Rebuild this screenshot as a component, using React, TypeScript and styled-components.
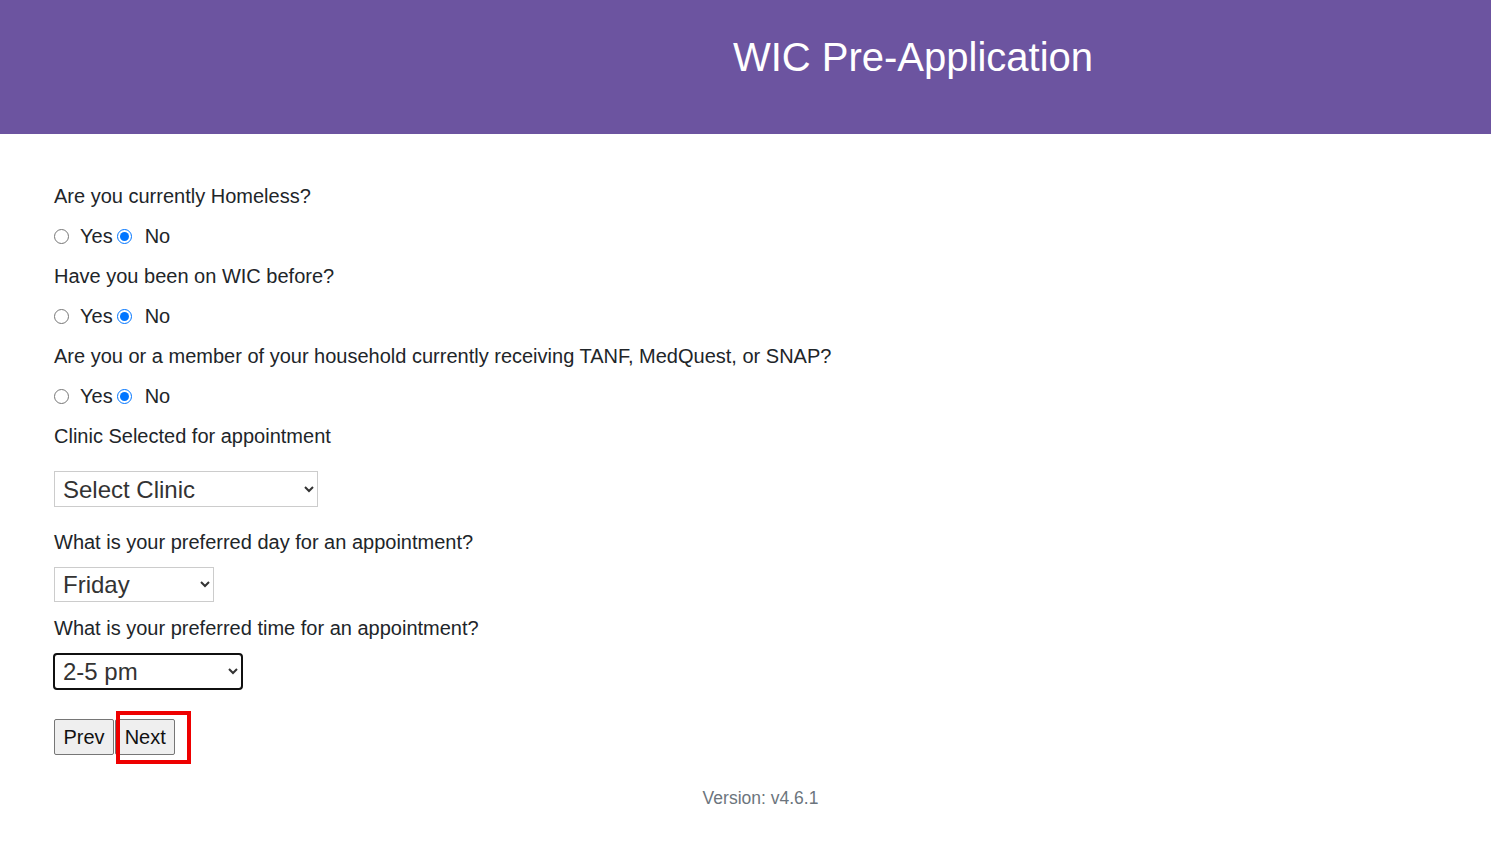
import React, { useState } from "react";
import styled, { createGlobalStyle } from "styled-components";

const GlobalStyle = createGlobalStyle`
  html, body {
    margin: 0;
    padding: 0;
    background: #ffffff;
  }
  body {
    font-family: "Liberation Sans", Arial, sans-serif;
    color: #212529;
  }
`;

type YesNo = "yes" | "no";

type Question = {
  id: string;
  text: string;
};

const questions: Question[] = [
  { id: "homeless", text: "Are you currently Homeless?" },
  { id: "wicBefore", text: "Have you been on WIC before?" },
  {
    id: "programs",
    text: "Are you or a member of your household currently receiving TANF, MedQuest, or SNAP?",
  },
];

export default function App() {
  const [answers, setAnswers] = useState<Record<string, YesNo>>({
    homeless: "no",
    wicBefore: "no",
    programs: "no",
  });
  const [clinic, setClinic] = useState("");
  const [day, setDay] = useState("Friday");
  const [time, setTime] = useState("2-5 pm");

  return (
    <>
      <GlobalStyle />
      <Header>
        <Title>WIC Pre-Application</Title>
      </Header>

      <Main>
        {questions.map((q) => (
          <React.Fragment key={q.id}>
            <Line>{q.text}</Line>
            <RadioRow>
              <Radio
                type="radio"
                name={q.id}
                checked={answers[q.id] === "yes"}
                onChange={() => setAnswers({ ...answers, [q.id]: "yes" })}
              />
              <RadioLabel>Yes</RadioLabel>
              <Radio
                type="radio"
                name={q.id}
                $spaced
                checked={answers[q.id] === "no"}
                onChange={() => setAnswers({ ...answers, [q.id]: "no" })}
              />
              <RadioLabel>No</RadioLabel>
            </RadioRow>
          </React.Fragment>
        ))}

        <Line>Clinic Selected for appointment</Line>
        <Select
          $width={264}
          $height={36}
          $gapTop={15}
          value={clinic}
          onChange={(e) => setClinic(e.target.value)}
        >
          <option value="">Select Clinic</option>
          <option value="honolulu">Honolulu</option>
          <option value="hilo">Hilo</option>
        </Select>

        <Line $gapTop={15}>What is your preferred day for an appointment?</Line>
        <Select
          $width={160}
          $height={35}
          $gapTop={5}
          value={day}
          onChange={(e) => setDay(e.target.value)}
        >
          <option>Monday</option>
          <option>Tuesday</option>
          <option>Wednesday</option>
          <option>Thursday</option>
          <option>Friday</option>
        </Select>

        <Line $gapTop={6}>What is your preferred time for an appointment?</Line>
        <Select
          $width={188}
          $height={35}
          $gapTop={6}
          $focused
          value={time}
          onChange={(e) => setTime(e.target.value)}
        >
          <option>8-11 am</option>
          <option>11-2 pm</option>
          <option>2-5 pm</option>
        </Select>

        <Buttons>
          <NavButton type="button">Prev</NavButton>
          <Highlighted>
            <NavButton type="button">Next</NavButton>
            <RedMark />
          </Highlighted>
        </Buttons>
      </Main>

      <Footer>Version: v4.6.1</Footer>
    </>
  );
}

const Header = styled.header`
  height: 134px;
  box-sizing: border-box;
  padding: 34px 0 0 335px;
  background: #6c54a0;
  display: flex;
  justify-content: center;
`;

const Title = styled.h1`
  margin: 0;
  font-size: 40px;
  font-weight: 400;
  line-height: 46px;
  color: #ffffff;
`;

const Main = styled.main`
  display: flex;
  flex-direction: column;
  align-items: flex-start;
  padding: 42px 0 0 54px;
`;

const Line = styled.div<{ $gapTop?: number }>`
  font-size: 20px;
  line-height: 40px;
  margin-top: ${({ $gapTop }) => $gapTop ?? 0}px;
`;

const RadioRow = styled.div`
  display: flex;
  align-items: center;
  height: 40px;
  font-size: 20px;
`;

const Radio = styled.input<{ $spaced?: boolean }>`
  width: 15px;
  height: 15px;
  margin: 1px ${({ $spaced }) => ($spaced ? 13 : 11)}px 0
    ${({ $spaced }) => ($spaced ? 4 : 0)}px;
`;

const RadioLabel = styled.span`
  line-height: 40px;
`;

const Select = styled.select<{
  $width: number;
  $height: number;
  $gapTop: number;
  $focused?: boolean;
}>`
  width: ${({ $width }) => $width}px;
  height: ${({ $height }) => $height}px;
  margin-top: ${({ $gapTop }) => $gapTop}px;
  box-sizing: border-box;
  padding: 0 6px 0 4px;
  font-family: "Liberation Sans", Arial, sans-serif;
  font-size: 24px;
  color: #333333;
  background: #ffffff;
  border: 1px solid #cccccc;
  border-radius: 0;
  outline: ${({ $focused }) => ($focused ? "2px solid #101010" : "none")};
  outline-offset: -1px;
  ${({ $focused }) => ($focused ? "border-radius: 3px;" : "")}
`;

const Buttons = styled.div`
  display: flex;
  align-items: center;
  gap: 0;
  margin-top: 30px;
`;

const NavButton = styled.button`
  height: 36px;
  box-sizing: border-box;
  padding: 0 8.5px;
  font-family: "Liberation Sans", Arial, sans-serif;
  font-size: 20px;
  color: #111111;
  background: #efefef;
  border: 1px solid #767676;
  border-radius: 2px;
`;

const Highlighted = styled.div`
  position: relative;
  display: flex;
  margin-left: 1px;
`;

const RedMark = styled.div`
  position: absolute;
  left: 1px;
  top: -8px;
  width: 75px;
  height: 53px;
  box-sizing: border-box;
  border: 4px solid #ee0000;
  pointer-events: none;
`;

const Footer = styled.footer`
  margin: 33px 24px 0 54px;
  text-align: center;
  font-size: 17.5px;
  line-height: 20px;
  color: #6c757d;
`;
